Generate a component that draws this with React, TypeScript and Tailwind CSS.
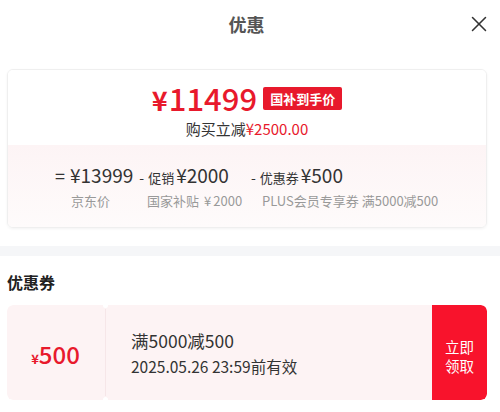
import { X } from "lucide-react";

const font = "font-['Noto_Sans_CJK_SC',sans-serif]";

export default function App() {
  return (
    <div className={`w-[500px] h-[412px] bg-white overflow-hidden ${font}`}>
      {/* Header */}
      <div className="relative h-[48px] w-[493px] flex items-center justify-center">
        <span className="text-[18px] font-bold text-[#555]">优惠</span>
        <X className="absolute left-[466px] top-[11px] w-[26px] h-[26px] text-[#333]" strokeWidth={1.4} />
      </div>

      {/* Price breakdown card */}
      <div className="ml-[7px] mr-[13px] mt-[21px] h-[159px] rounded-[6px] border border-[#efefef] shadow-[0_1px_3px_rgba(0,0,0,0.05)] overflow-hidden flex flex-col">
        <div className="h-[75px] bg-white flex flex-col items-center pt-[11px]">
          <div className="flex items-center h-[32px]">
            <span className="text-[#e8192c] font-medium leading-none flex items-baseline">
              <span className="text-[27px] font-bold mr-[1px]">¥</span>
              <span className="text-[31px]">11499</span>
            </span>
            <span className="ml-[6px] bg-[#e8192c] text-white text-[13px] font-bold leading-[23px] h-[23px] px-[7px] rounded-[2px] mt-[3px]">
              国补到手价
            </span>
          </div>
          <div className="text-[15px] leading-[16px] mt-[8px] text-[#333]">
            购买立减<span className="text-[#e8192c]">¥2500.00</span>
          </div>
        </div>
        <div className="flex-1 bg-gradient-to-b from-[#fdf4f5] to-[#fefbfb] pl-[47px] pt-[20px]">
          <div className="flex items-baseline text-[#333] leading-none">
            <span className="text-[18px] w-[15px]">=</span>
            <span className="text-[19px]">¥13999</span>
            <span className="text-[14px] ml-[6px]">-</span>
            <span className="text-[13px] ml-[4px]">促销</span>
            <span className="text-[19px] ml-[2px]">¥2000</span>
            <span className="text-[14px] ml-[22px]">-</span>
            <span className="text-[13px] ml-[4px]">优惠券</span>
            <span className="text-[19px] ml-[2px]">¥500</span>
          </div>
          <div className="flex text-[13px] text-[#999] leading-none mt-[10px]">
            <span className="w-[92px] pl-[16px]">京东价</span>
            <span className="w-[115px]">
              国家补贴<span className="ml-[5px]">¥</span>
              <span className="ml-[2px]">2000</span>
            </span>
            <span>PLUS会员专享券 满5000减500</span>
          </div>
        </div>
      </div>

      {/* Divider band */}
      <div className="mt-[18px] h-[10px] bg-[#f5f6f8]" />

      {/* Coupons */}
      <div className="pl-[7px] pr-[13px] pt-[18px]">
        <div className="text-[16px] font-bold text-[#222] leading-none">优惠券</div>
        <div className="mt-[15px] h-[95px] flex rounded-[6px] overflow-hidden">
          <div className="w-[97px] bg-[#fdf3f4] flex items-center justify-center text-[#e8192c] rounded-l-[6px]">
            <span className="flex items-baseline leading-none pt-[2px]">
              <span className="text-[13px] font-bold">¥</span>
              <span className="text-[24px] font-medium">500</span>
            </span>
          </div>
          <div className="relative w-[3px] bg-[#fdf3f4]">
            <span className="absolute -top-[3px] left-[-1px] w-[5px] h-[6px] rounded-full bg-white" />
            <span className="absolute -bottom-[3px] left-[-1px] w-[5px] h-[6px] rounded-full bg-white" />
            <span className="absolute top-[4px] bottom-[4px] left-[1px] w-px bg-[#f6e6e8]" />
          </div>
          <div className="flex-1 bg-[#fdf3f4] pl-[24px] pt-[27px]">
            <div className="text-[17.5px] text-[#333] leading-none">满5000减500</div>
            <div className="text-[15.5px] text-[#333] leading-none mt-[9px]">2025.05.26 23:59前有效</div>
          </div>
          <div className="w-[55px] bg-[#f8132c] rounded-r-[6px] flex items-center justify-center pt-[6px]">
            <span className="text-white text-[14.5px] leading-[19px] text-center w-[30px]">立即领取</span>
          </div>
        </div>
      </div>
    </div>
  );
}
